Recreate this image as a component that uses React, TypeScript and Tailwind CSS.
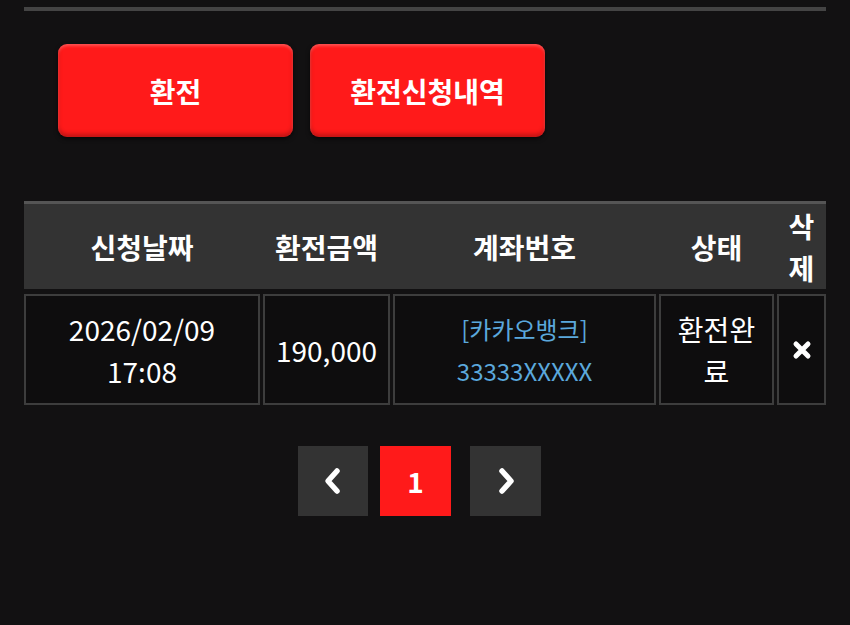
import React from "react";

const font = { fontFamily: '"Noto Sans CJK KR", "Noto Sans", sans-serif' };

type Row = { date: string; time: string; amount: string; bank: string; account: string; status: string };

const rows: Row[] = [
  { date: "2026/02/09", time: "17:08", amount: "190,000", bank: "[카카오뱅크]", account: "33333XXXXX", status: "환전완료" },
];

const cols = "grid grid-cols-[236px_127px_263px_115px_49px] gap-x-[3px]";

function Chevron({ dir }: { dir: "left" | "right" }) {
  return (
    <svg width="24" height="32" viewBox="0 0 24 32" fill="none">
      <polyline
        points={dir === "left" ? "16,6 7,16 16,26" : "8,6 17,16 8,26"}
        stroke="white"
        strokeWidth="5.5"
        strokeLinecap="round"
        strokeLinejoin="round"
      />
    </svg>
  );
}

export default function App() {
  return (
    <div className="min-h-[625px] w-[850px] bg-[#121112] pt-[7px] text-white" style={font}>
      <div className="mx-[24px] h-[4px] bg-[#444444]" />

      {/* action buttons */}
      <div className="ml-[58px] mt-[33px] flex gap-[17px]">
        {["환전", "환전신청내역"].map((label) => (
          <button
            key={label}
            className="flex h-[93px] w-[235px] items-center justify-center rounded-[9px] bg-[#ff1a1a] text-[28px] font-bold text-white shadow-[inset_0_2px_3px_rgba(255,255,255,0.25),inset_0_-3px_4px_rgba(0,0,0,0.25),0_2px_4px_rgba(0,0,0,0.6)]"
          >
            {label}
          </button>
        ))}
      </div>

      {/* history table */}
      <div className="mx-[24px] mt-[64px]">
        <div className={`${cols} h-[88px] items-center border-t-[3px] border-[#555555] bg-[#333333] text-[28px] font-bold`}>
          <div className="text-center">신청날짜</div>
          <div className="text-center">환전금액</div>
          <div className="text-center">계좌번호</div>
          <div className="text-center">상태</div>
          <div className="text-center leading-[42px]">
            삭<br />제
          </div>
        </div>

        {rows.map((r) => (
          <div key={r.date + r.time} className={`${cols} mt-[5px] h-[111px] text-[28px] leading-[42px]`}>
            <div className="flex flex-col items-center justify-center border-2 border-[#3d3d3d] bg-[#0e0d0e]">
              <span>{r.date}</span>
              <span>{r.time}</span>
            </div>
            <div className="flex items-center justify-center border-2 border-[#3d3d3d] bg-[#0e0d0e]">{r.amount}</div>
            <div className="flex flex-col items-center justify-center border-2 border-[#3d3d3d] bg-[#0e0d0e] text-[24px] text-[#5ba8dc]">
              <span>{r.bank}</span>
              <span>{r.account}</span>
            </div>
            <div className="flex items-center justify-center border-2 border-[#3d3d3d] bg-[#0e0d0e] px-[12px] text-center">
              {r.status}
            </div>
            <div className="flex items-center justify-center border-2 border-[#3d3d3d] bg-[#0e0d0e]">
              <svg width="20" height="20" viewBox="0 0 20 20">
                <path d="M4 4 L16 16 M16 4 L4 16" stroke="white" strokeWidth="5" strokeLinecap="round" />
              </svg>
            </div>
          </div>
        ))}
      </div>

      {/* pagination */}
      <div className="ml-[298px] mt-[41px] flex">
        <button className="flex h-[70px] w-[70px] items-center justify-center bg-[#333333]">
          <Chevron dir="left" />
        </button>
        <button className="ml-[12px] flex h-[70px] w-[71px] items-center justify-center bg-[#ff1a1a] text-[28px] font-bold text-white">
          1
        </button>
        <button className="ml-[19px] flex h-[70px] w-[71px] items-center justify-center bg-[#333333]">
          <Chevron dir="right" />
        </button>
      </div>
    </div>
  );
}
